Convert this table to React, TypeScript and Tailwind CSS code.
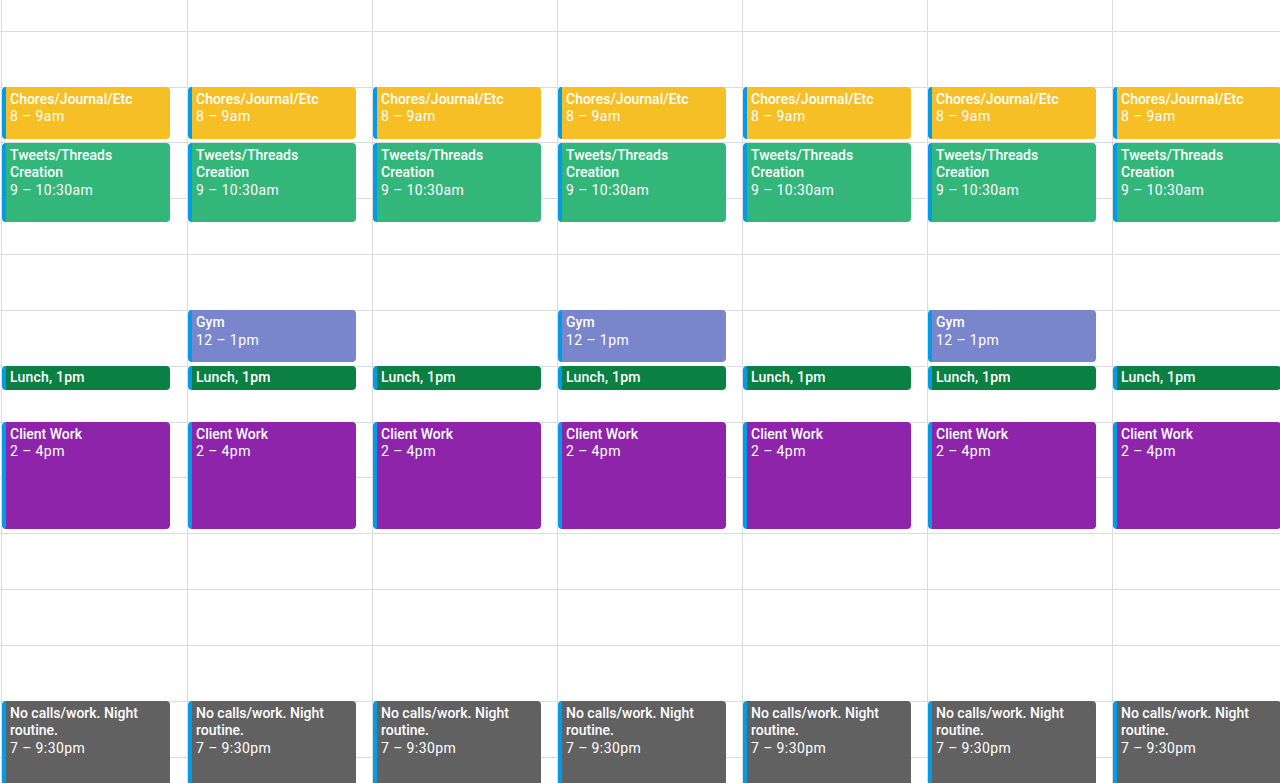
import React from "react";

type CalEvent = {
  title: string;
  time?: string;
  start: number;
  end: number;
  color: string;
  compact?: boolean;
};

const HOUR = 55.83;
const FIRST_LINE = 31; // y of the 7am line

const baseEvents: CalEvent[] = [
  { title: "Chores/Journal/Etc", time: "8 – 9am", start: 8, end: 9, color: "bg-[#f6bf26]" },
  { title: "Tweets/Threads Creation", time: "9 – 10:30am", start: 9, end: 10.5, color: "bg-[#33b679]" },
  { title: "Lunch, 1pm", start: 13, end: 13.5, color: "bg-[#0b8043]", compact: true },
  { title: "Client Work", time: "2 – 4pm", start: 14, end: 16, color: "bg-[#8e24aa]" },
  { title: "No calls/work. Night routine.", time: "7 – 9:30pm", start: 19, end: 21.5, color: "bg-[#616161]" },
];

const gym: CalEvent = { title: "Gym", time: "12 – 1pm", start: 12, end: 13, color: "bg-[#7986cb]" };

const days = [0, 1, 2, 3, 4, 5, 6];
const gymDays = [1, 3, 5];

const EventBlock: React.FC<{ ev: CalEvent }> = ({ ev }) => {
  const top = FIRST_LINE + (ev.start - 7) * HOUR;
  const height = (ev.end - ev.start) * HOUR - 4;
  return (
    <div
      className={`absolute left-0 w-[168px] rounded-[4px] border-l-[4px] border-[#039be5] ${ev.color} text-white text-[14px] leading-[17.5px] pl-[4px] pr-[4px] overflow-hidden ${
        ev.compact ? "flex items-center" : "pt-[4px]"
      }`}
      style={{ top, height }}
    >
      {ev.compact ? (
        <div className="font-medium tracking-[0.2px]">{ev.title}</div>
      ) : (
        <>
          <div className="font-medium pr-[4px]">{ev.title}</div>
          <div className="tracking-[0.4px]">{ev.time}</div>
        </>
      )}
    </div>
  );
};

const App: React.FC = () => {
  return (
    <div
      className="w-[1280px] h-[783px] overflow-hidden bg-white"
      style={{ fontFamily: "Roboto, 'Liberation Sans', sans-serif" }}
    >
      <div className="relative flex pl-[1px] h-full">
        {/* hour lines */}
        <div className="absolute inset-x-0 top-[-25px] flex flex-col">
          {Array.from({ length: 16 }).map((_, i) => (
            <div key={i} className="h-[55.83px] border-t border-[#dadce0] shrink-0" />
          ))}
        </div>

        {/* day columns */}
        {days.map((d) => (
          <div
            key={d}
            className={`relative shrink-0 h-full border-l border-[#dadce0] ${d === 0 ? "w-[186px]" : "w-[185px]"}`}
          >
            {baseEvents.map((ev) => (
              <EventBlock key={ev.title} ev={ev} />
            ))}
            {gymDays.includes(d) && <EventBlock ev={gym} />}
          </div>
        ))}
      </div>
    </div>
  );
};

export default App;
